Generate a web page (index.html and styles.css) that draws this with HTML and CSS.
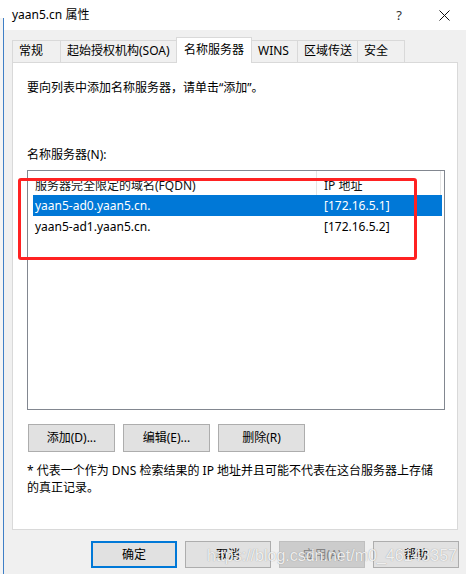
FILE: index.html
```html
<!DOCTYPE html>
<html lang="zh-CN">
<head>
<meta charset="utf-8">
<title>yaan5.cn 属性</title>
<link rel="stylesheet" href="styles.css">
</head>
<body>
<div class="window">
  <div class="titlebar">
    <span class="title">yaan5.cn 属性</span>
    <span class="tb-btn tb-help">?</span>
    <span class="tb-btn tb-close">
      <svg width="11" height="11" viewBox="0 0 11 11"><path d="M0.5 0.5 L10.5 10.5 M10.5 0.5 L0.5 10.5" stroke="#111" stroke-width="1" fill="none"/></svg>
    </span>
  </div>

  <div class="tabs">
    <div class="tab w1">常规</div>
    <div class="tab w2">起始授权机构(SOA)</div>
    <div class="tab tab-active w3">名称服务器</div>
    <div class="tab w4">WINS</div>
    <div class="tab w5">区域传送</div>
    <div class="tab w6">安全</div>
  </div>

  <div class="panel">
    <p class="intro">要向列表中添加名称服务器，请单击“添加”。</p>
    <p class="label">名称服务器(N):</p>
    <div class="listbox">
      <div class="lv-header">
        <div class="col col-name">服务器完全限定的域名(FQDN)</div>
        <div class="col col-ip">IP 地址</div>
      </div>
      <div class="lv-row selected">
        <div class="cell cell-name">yaan5-ad0.yaan5.cn.</div>
        <div class="cell cell-ip">[172.16.5.1]</div>
      </div>
      <div class="lv-row">
        <div class="cell cell-name">yaan5-ad1.yaan5.cn.</div>
        <div class="cell cell-ip">[172.16.5.2]</div>
      </div>
    </div>
    <div class="actions">
      <div class="btn">添加(D)...</div>
      <div class="btn">编辑(E)...</div>
      <div class="btn">删除(R)</div>
    </div>
    <p class="note">* 代表一个作为 DNS 检索结果的 IP 地址并且可能不代表在这台服务器上存储的真正记录。</p>
  </div>

  <div class="footer">
    <div class="btn btn-fb btn-default">确定</div>
    <div class="btn btn-fb">取消</div>
    <div class="btn btn-fb btn-disabled">应用(A)</div>
    <div class="btn btn-fb">帮助</div>
  </div>

  <div class="left-edge"></div>
  <div class="highlight"></div>
  <div class="watermark">https://blog.csdn.net/m0_46143357</div>
</div>
</body>
</html>
```

FILE: styles.css
```css
* { box-sizing: border-box; }
html, body { margin: 0; padding: 0; }
body {
  width: 466px;
  height: 574px;
  overflow: hidden;
  font-family: "Noto Sans", "Noto Sans CJK SC", sans-serif;
  font-size: 12px;
  color: #000;
}
p { margin: 0; }

.window {
  position: relative;
  width: 466px;
  height: 574px;
  background: #f0f0f0;
  display: flex;
  flex-direction: column;
}

.titlebar {
  height: 30px;
  background: #fff;
  display: flex;
  align-items: center;
  padding-left: 12px;
  flex-shrink: 0;
}
.title { flex: 1; line-height: 16px; }
.tb-btn {
  height: 30px;
  display: flex;
  align-items: center;
  justify-content: center;
}
.tb-help { width: 46px; font-size: 13px; color: #333; }
.tb-close { width: 44px; }

.tabs {
  height: 32px;
  padding-left: 12px;
  display: flex;
  align-items: flex-end;
  flex-shrink: 0;
}
.tab {
  height: 22px;
  line-height: 20px;
  padding-left: 6px;
  border: 1px solid #d9d9d9;
  border-bottom: none;
  background: #f0f0f0;
  margin-right: -1px;
  white-space: nowrap;
}
.tab-active {
  height: 26px;
  margin-bottom: -1px;
  background: #fff;
  position: relative;
  z-index: 1;
  line-height: 23px;
  padding-left: 7px;
}
.w1 { width: 49px; }
.w2 { width: 117px; }
.w3 { width: 76px; }
.w4 { width: 47px; }
.w5 { width: 61px; }
.w6 { width: 48px; }

.panel {
  margin-left: 12px;
  width: 446px;
  height: 468px;
  background: #fff;
  border: 1px solid #d9d9d9;
  padding: 16px 0 0 14px;
  flex-shrink: 0;
}
.intro { line-height: 18px; }
.label { line-height: 18px; margin-top: 49px; }

.listbox {
  margin-top: 6px;
  width: 418px;
  height: 240px;
  border: 1px solid #828790;
  background: #fff;
}
.lv-header {
  height: 24px;
  display: flex;
  overflow: hidden;
}
.col {
  padding-left: 7px;
  padding-top: 5px;
  line-height: 20px;
  white-space: nowrap;
  border-right: 1px solid #e5e5e5;
  color: #111;
}
.col-name { width: 289px; }
.col-ip { width: 124px; }

.lv-row {
  margin-left: 5px;
  width: 409px;
  height: 21px;
  display: flex;
  align-items: center;
}
.lv-row.selected { background: #0078d7; color: #fff; }
.cell { white-space: nowrap; line-height: 18px; }
.cell-name { width: 291px; padding-left: 2px; }
.cell-ip { flex: 1; }

.actions {
  margin-top: 14px;
  margin-left: 1px;
  display: flex;
  gap: 8px;
}
.btn {
  width: 87px;
  height: 28px;
  background: #e1e1e1;
  border: 1px solid #adadad;
  display: flex;
  align-items: center;
  justify-content: center;
  line-height: 16px;
  white-space: nowrap;
}

.note {
  margin-top: 10px;
  line-height: 17px;
  width: 411px;
}

.footer {
  margin-top: 11px;
  padding-left: 91px;
  display: flex;
  gap: 8px;
}
.btn-fb { width: 86px; height: 27px; }
.btn-default { border: 2px solid #0078d7; }
.btn-disabled { background: #cccccc; border-color: #bfbfbf; color: #838383; }

.left-edge {
  position: absolute;
  left: 0;
  top: 18px;
  width: 4px;
  height: 556px;
  background: #f4f4f4;
  border-right: 1px solid #3f7fc6;
}

.highlight {
  position: absolute;
  left: 18px;
  top: 178px;
  width: 399px;
  height: 82px;
  border: 3px solid #ff2222;
  border-radius: 3px;
}

.watermark {
  position: absolute;
  left: 207px;
  top: 546px;
  font-family: "Liberation Sans", Arial, sans-serif;
  font-size: 16px;
  line-height: 20px;
  color: rgba(255, 255, 255, 0.85);
  text-shadow: 0 0 1px rgba(90, 90, 90, 0.6);
  white-space: nowrap;
}
```
